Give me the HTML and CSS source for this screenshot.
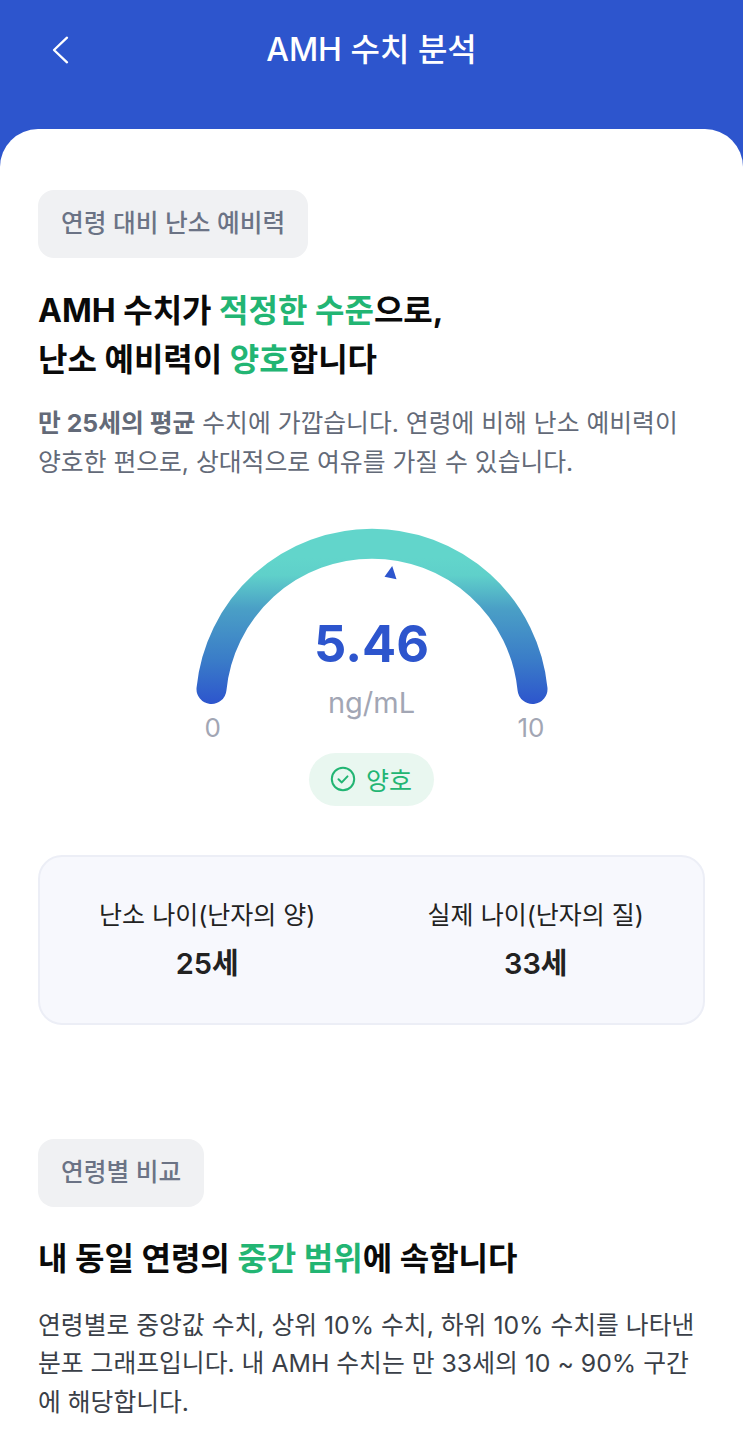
FILE: index.html
```html
<!DOCTYPE html>
<html lang="ko">
<head>
    <meta charset="UTF-8">
    <meta name="viewport" content="width=device-width, initial-scale=1.0">
    <title>AMH 수치 분석</title>
    <link rel="stylesheet" href="styles.css">
</head>
<body>
    <header class="top-bar">
        <button class="back-button" aria-label="뒤로">
            <svg width="20" height="28" viewBox="0 0 20 28"><path d="M17 1.700 L4 14 L17 26.300" fill="none" stroke="#fff" stroke-width="2.3" stroke-linecap="round" stroke-linejoin="round"/></svg>
        </button>
        <h1>AMH 수치 분석</h1>
    </header>

    <main class="sheet">
        <!-- 연령 대비 난소 예비력 -->
        <section class="block">
            <span class="tag">연령 대비 난소 예비력</span>
            <h2>AMH 수치가 <em>적정한 수준</em>으로,<br>난소 예비력이 <em>양호</em>합니다</h2>
            <p class="desc desc-muted"><strong>만 25세의 평균</strong> 수치에 가깝습니다. 연령에 비해 난소 예비력이<br>양호한 편으로, 상대적으로 여유를 가질 수 있습니다.</p>

            <div class="gauge">
                <svg class="gauge-arc" width="372" height="200" viewBox="0 0 372 200">
                    <defs>
                        <linearGradient id="arcFill" gradientUnits="userSpaceOnUse" x1="0" y1="30" x2="0" y2="176">
                            <stop offset="0" stop-color="#62d5cb"/>
                            <stop offset="0.12" stop-color="#5fd0ca"/>
                            <stop offset="0.35" stop-color="#4a9fc6"/>
                            <stop offset="0.7" stop-color="#3a7cc8"/>
                            <stop offset="1" stop-color="#2d55cd"/>
                        </linearGradient>
                    </defs>
                    <path d="M25.500 161 A161.300 161.300 0 0 1 346.500 161" fill="none" stroke="url(#arcFill)" stroke-width="30" stroke-linecap="round"/>
                    <path d="M206.200 38 L198.500 48.700 L210.500 51.300 Z" fill="#2d55cd"/>
                </svg>
                <div class="gauge-value">5.46</div>
                <div class="gauge-unit">ng/mL</div>
                <span class="gauge-min">0</span>
                <span class="gauge-max">10</span>
            </div>

            <div class="status-row">
                <span class="status">
                    <svg width="26" height="26" viewBox="0 0 26 26"><circle cx="13" cy="13" r="11.2" fill="none" stroke="#22b573" stroke-width="2"/><path d="M8.500 13.300 L11.800 16.400 L17.500 10.400" fill="none" stroke="#22b573" stroke-width="2" stroke-linecap="round" stroke-linejoin="round"/></svg>
                    양호
                </span>
            </div>

            <div class="stats">
                <div class="stat">
                    <div class="stat-label">난소 나이(난자의 양)</div>
                    <div class="stat-value">25세</div>
                </div>
                <div class="stat">
                    <div class="stat-label">실제 나이(난자의 질)</div>
                    <div class="stat-value">33세</div>
                </div>
            </div>
        </section>

        <!-- 연령별 비교 -->
        <section class="block block-second">
            <span class="tag">연령별 비교</span>
            <h2>내 동일 연령의 <em>중간 범위</em>에 속합니다</h2>
            <p class="desc">연령별로 중앙값 수치, 상위 10% 수치, 하위 10% 수치를 나타낸<br>분포 그래프입니다. 내 AMH 수치는 만 33세의 10 ~ 90% 구간<br>에 해당합니다.</p>
        </section>
    </main>
</body>
</html>
```

FILE: styles.css
```css
* {
    box-sizing: border-box;
}

html, body {
    height: 100%;
}

body {
    margin: 0;
    background-color: #2d55cd;
    font-family: Inter, "Noto Sans CJK KR", sans-serif;
    color: #111;
    overflow: hidden;
}

.top-bar {
    position: relative;
    height: 129px;
    padding-top: 28px;
    color: white;
    text-align: center;
}

.top-bar h1 {
    margin: 0;
    font-size: 32px;
    line-height: 44px;
    font-weight: 500;
}

.back-button {
    position: absolute;
    left: 50px;
    top: 36px;
    padding: 0;
    border: none;
    background: none;
}

.sheet {
    height: 1322px;
    padding: 61px 38px 0;
    background-color: white;
    border-radius: 38px 38px 0 0;
}

.tag {
    display: inline-block;
    height: 68px;
    padding: 0 23px;
    background-color: #f0f1f3;
    border-radius: 16px;
    color: #6b7385;
    font-size: 24.7px;
    line-height: 66px;
    font-weight: 500;
    vertical-align: top;
}

h2 {
    margin: 28px 0 0;
    font-size: 32px;
    line-height: 49px;
    font-weight: 700;
    color: #0a0a0a;
}

h2 em {
    font-style: normal;
    color: #22b573;
}

.desc {
    margin: 20px 0 0;
    font-size: 24.8px;
    line-height: 38.8px;
    color: #3a3f48;
    white-space: nowrap;
}

.desc-muted {
    color: #636a78;
}

.desc strong {
    font-weight: 700;
}

.gauge {
    position: relative;
    width: 372px;
    height: 200px;
    margin: 46px auto 0;
    text-align: center;
}

.gauge-arc {
    position: absolute;
    left: 0;
    top: 0;
}

.gauge-value {
    position: absolute;
    left: 0;
    right: 0;
    top: 85px;
    font-size: 50.5px;
    line-height: 62px;
    font-weight: 700;
    color: #2d55cd;
}

.gauge-unit {
    position: absolute;
    left: 0;
    right: 0;
    top: 155px;
    font-size: 29px;
    line-height: 40px;
    font-weight: 400;
    color: #a2a6b4;
}

.gauge-min,
.gauge-max {
    position: absolute;
    top: 183px;
    font-size: 26px;
    line-height: 34px;
    color: #a2a6b4;
}

.gauge-min {
    left: 19px;
}

.gauge-max {
    right: 13px;
}

.status-row {
    display: flex;
    justify-content: center;
    margin-top: 25px;
}

.status {
    display: flex;
    align-items: center;
    gap: 10px;
    height: 53px;
    padding: 0 22px 0 21px;
    background-color: #e9f7f0;
    border-radius: 27px;
    color: #22b573;
    font-size: 25px;
    font-weight: 400;
}

.stats {
    display: grid;
    grid-template-columns: 1fr 1fr;
    height: 170px;
    margin-top: 49px;
    padding: 38px 3px 0;
    background-color: #f7f8fd;
    border: 2px solid #eceef6;
    border-radius: 24px;
    text-align: center;
}

.stat-label {
    font-size: 25px;
    line-height: 40px;
    color: #222;
}

.stat-value {
    margin-top: 8px;
    font-size: 29px;
    line-height: 42px;
    font-weight: 600;
    color: #222;
}

.block-second {
    margin-top: 114px;
}

.block-second h2 {
    margin-top: 27px;
}

.block-second .desc {
    margin-top: 23px;
}
```
